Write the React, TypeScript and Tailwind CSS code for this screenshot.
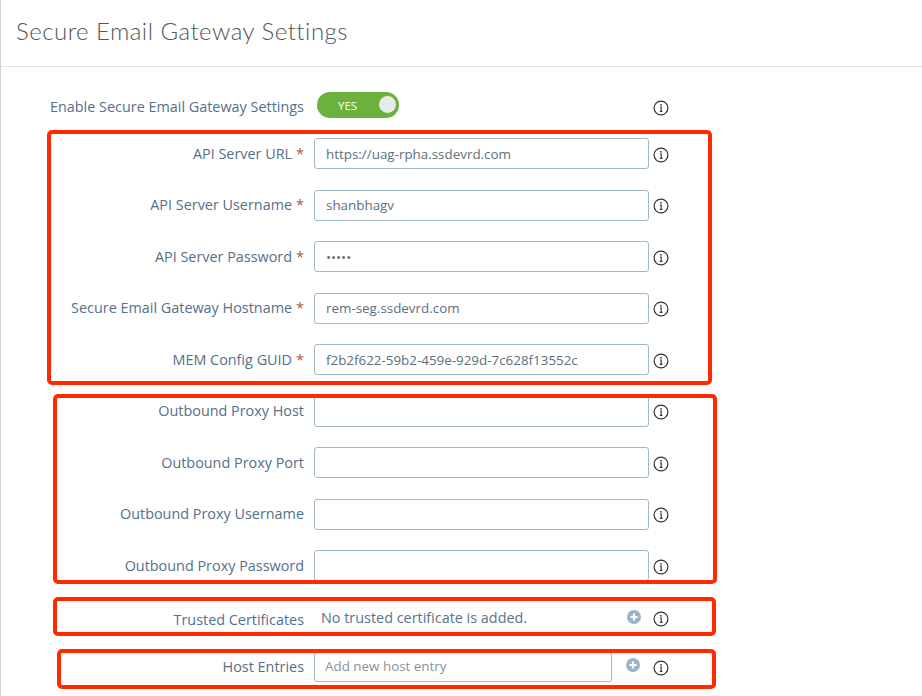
const fields = [
  { label: "API Server URL", value: "https://uag-rpha.ssdevrd.com", required: true },
  { label: "API Server Username", value: "shanbhagv", required: true },
  { label: "API Server Password", value: "•••••", required: true },
  { label: "Secure Email Gateway Hostname", value: "rem-seg.ssdevrd.com", required: true },
  { label: "MEM Config GUID", value: "f2b2f622-59b2-459e-929d-7c628f13552c", required: true },
  { label: "Outbound Proxy Host", value: "" },
  { label: "Outbound Proxy Port", value: "" },
  { label: "Outbound Proxy Username", value: "" },
  { label: "Outbound Proxy Password", value: "" },
];

function InfoIcon() {
  return (
    <svg viewBox="0 0 16 16" className="mt-[2px] h-[16px] w-[16px] shrink-0" fill="none">
      <circle cx="8" cy="8" r="6.9" stroke="#333" strokeWidth="1.2" />
      <circle cx="8" cy="4.8" r="0.9" fill="#333" />
      <path d="M6.9 7h1.3v4.2M6.8 11.4h2.6" stroke="#333" strokeWidth="1.1" />
    </svg>
  );
}

function PlusIcon() {
  return (
    <svg viewBox="0 0 14 14" className="h-[14px] w-[14px] shrink-0">
      <circle cx="7" cy="7" r="7" fill="#9bb3c6" />
      <path d="M7 3.5v7M3.5 7h7" stroke="#fff" strokeWidth="2.2" />
    </svg>
  );
}

function RedBox({ className }: { className: string }) {
  return <div className={"absolute rounded-[5px] border-[4px] border-[#ff2a00] " + className} />;
}

export default function App() {
  return (
    <div className="relative h-[696px] w-[922px] overflow-hidden border-l border-[#d4d4d4] bg-white font-['Open_Sans',sans-serif] text-[14.4px] text-[#54708a]">
      <header className="flex h-[67px] items-center border-b border-[#e2e2e2] pb-[4px] pl-[15px]">
        <h1 className="font-['Lato',sans-serif] text-[24px] font-light tracking-[0.48px] text-[#555]">
          Secure Email Gateway Settings
        </h1>
      </header>

      <div className="flex h-[61px] items-center pt-[19px]">
        <span className="ml-[49px] w-[267px]">Enable Secure Email Gateway Settings</span>
        <div className="mb-[5px] flex h-[26px] w-[82px] items-center justify-between rounded-full bg-[#6ab23c] pl-[21px] pr-[3px]">
          <span className="pt-[2px] text-[11.5px] font-medium text-white">YES</span>
          <span className="h-[17px] w-[17px] rounded-full bg-[#e9e9e9]" />
        </div>
        <span className="ml-[254px]">
          <InfoIcon />
        </span>
      </div>

      <div className="flex flex-col">
        {fields.map((f) => (
          <div key={f.label} className="flex h-[51.5px] items-center">
            <label className="w-[303px] shrink-0 text-right">
              {f.label}
              {f.required && <span className="ml-[4px] text-[#b5533f]">*</span>}
            </label>
            <div className="ml-[10px] flex h-[31px] w-[335px] shrink-0 items-center rounded-[3px] border border-[#a3b8c9] pl-[11px] text-[13.4px] text-[#5c6f7e]">
              {f.value}
            </div>
            <span className="ml-[4px]">
              <InfoIcon />
            </span>
          </div>
        ))}

        <div className="flex h-[53.5px] items-center">
          <label className="w-[303px] shrink-0 pt-[3px] text-right">Trusted Certificates</label>
          <span className="ml-[17px] w-[306px] shrink-0 text-[#5c7486]">No trusted certificate is added.</span>
          <span className="mb-[2px]">
            <PlusIcon />
          </span>
          <span className="ml-[12px]">
            <InfoIcon />
          </span>
        </div>

        <div className="flex h-[43px] items-center">
          <label className="w-[303px] shrink-0 text-right">Host Entries</label>
          <div className="ml-[10px] flex h-[30px] w-[298px] shrink-0 items-center rounded-[3px] border border-[#a3b8c9] pl-[10px] text-[13.4px] text-[#8b9299]">
            Add new host entry
          </div>
          <span className="ml-[14px] mb-[3px]">
            <PlusIcon />
          </span>
          <span className="ml-[13px]">
            <InfoIcon />
          </span>
        </div>
      </div>

      <RedBox className="left-[46px] top-[130px] h-[255px] w-[665px]" />
      <RedBox className="left-[52px] top-[394px] h-[190px] w-[664px]" />
      <RedBox className="left-[52px] top-[597px] h-[39px] w-[663px]" />
      <RedBox className="left-[56px] top-[649px] h-[40px] w-[659px]" />
    </div>
  );
}
